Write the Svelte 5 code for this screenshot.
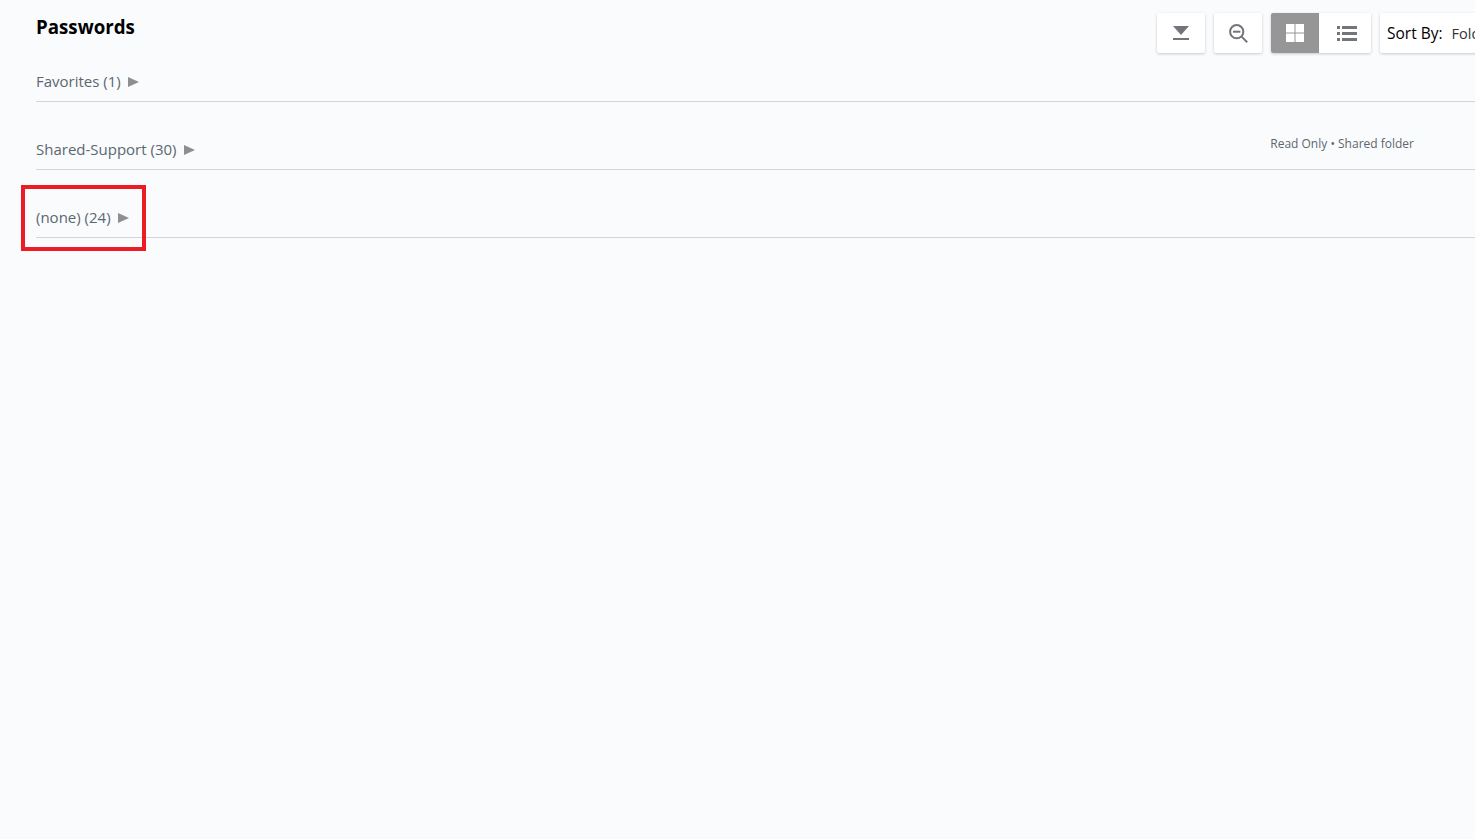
<script>
  const folders = [
    { name: 'Favorites (1)' },
    { name: 'Shared-Support (30)', note: 'Read Only • Shared folder' },
    { name: '(none) (24)', marked: true }
  ];
</script>

<div class="page">
  <header class="top">
    <h1>Passwords</h1>
    <div class="tools">
      <button class="tool" aria-label="Collapse all">
        <svg width="16" height="15" viewBox="0 0 16 15">
          <path d="M0 0h16l-8 9z" fill="#72767a" />
          <rect y="12" width="16" height="2" fill="#72767a" />
        </svg>
      </button>
      <button class="tool" aria-label="Zoom out">
        <svg width="19" height="19" viewBox="0 0 19 19" fill="none" stroke="#72767a">
          <circle cx="7.7" cy="7.7" r="6.6" stroke-width="2" />
          <path d="M4 7.7h7.4" stroke-width="2" />
          <path d="M12.6 12.6l5.6 5.6" stroke-width="2" />
        </svg>
      </button>
      <div class="toggle">
        <button class="view on" aria-label="Grid view">
          <svg width="18" height="18" viewBox="0 0 18 18" fill="#fff">
            <rect width="8.5" height="8.5" />
            <rect x="9.5" width="8.5" height="8.5" />
            <rect y="9.5" width="8.5" height="8.5" />
            <rect x="9.5" y="9.5" width="8.5" height="8.5" />
          </svg>
        </button>
        <button class="view" aria-label="List view">
          <svg width="20" height="15" viewBox="0 0 20 15" fill="#72767a">
            <rect y="0" width="3" height="3" />
            <rect x="5" y="0" width="15" height="3" />
            <rect y="6" width="3" height="3" />
            <rect x="5" y="6" width="15" height="3" />
            <rect y="12" width="3" height="3" />
            <rect x="5" y="12" width="15" height="3" />
          </svg>
        </button>
      </div>
      <div class="sort">
        <span class="sort-label">Sort By:</span>
        <span class="sort-value">Folder</span>
      </div>
    </div>
  </header>

  <section class="folders">
    {#each folders as folder}
      <div class="folder">
        <div class="title" class:marked={folder.marked}>
          <span>{folder.name}</span>
          <i class="arrow"></i>
        </div>
        {#if folder.note}
          <span class="note">{folder.note}</span>
        {/if}
      </div>
    {/each}
  </section>
</div>

<style>
  :global(body) {
    background: #fafbfd;
    font-family: "Open Sans", sans-serif;
    overflow: hidden;
  }

  .page {
    height: 839px;
    width: 1475px;
    overflow: hidden;
    padding-left: 36px;
    box-sizing: border-box;
  }

  .top {
    height: 62px;
    display: flex;
    justify-content: space-between;
    align-items: flex-start;
  }

  h1 {
    margin: 15px 0 0;
    font-size: 18.72px;
    line-height: 24px;
    font-weight: 700;
    color: #000;
  }

  .tools {
    display: flex;
    gap: 9px;
    margin-top: 13px;
    margin-right: -32px;
  }

  button {
    border: none;
    padding: 0;
    background: #fff;
    display: flex;
    align-items: center;
    justify-content: center;
  }

  .tool {
    width: 48px;
    height: 40px;
    border-radius: 2px;
    box-shadow: 0 1px 3px rgba(0, 0, 0, 0.2);
  }

  .toggle {
    display: flex;
    border-radius: 2px;
    overflow: hidden;
    box-shadow: 0 1px 3px rgba(0, 0, 0, 0.2);
  }

  .view {
    width: 52px;
    height: 40px;
    padding-left: 4px;
    box-sizing: border-box;
  }

  .view.on {
    width: 48px;
    padding-left: 0;
    background: #969696;
  }

  .sort {
    width: 127px;
    height: 40px;
    background: #fff;
    border-radius: 2px;
    box-shadow: 0 1px 3px rgba(0, 0, 0, 0.2);
    display: flex;
    align-items: center;
    gap: 9px;
    padding-left: 7px;
    box-sizing: border-box;
    font-size: 15px;
    white-space: nowrap;
  }

  .sort-label {
    color: #000;
    font-size: 15.5px;
    font-weight: 500;
  }

  .sort-value {
    color: #333;
    font-size: 14.5px;
  }

  .folder {
    height: 68px;
    box-sizing: border-box;
    border-bottom: 1px solid #d3d5d8;
    display: flex;
    justify-content: space-between;
    position: relative;
  }

  .folder:first-child {
    height: 40px;
  }

  .title {
    position: relative;
    align-self: flex-end;
    margin-bottom: 9px;
    display: flex;
    align-items: center;
    gap: 7px;
    font-size: 15px;
    line-height: 22px;
    color: #5b6770;
  }

  .arrow {
    width: 0;
    height: 0;
    border-left: 11px solid #8f8f8f;
    border-top: 5.5px solid transparent;
    border-bottom: 5.5px solid transparent;
    margin-top: 2px;
  }

  .marked::after {
    content: "";
    position: absolute;
    left: -15px;
    top: -21px;
    width: 125px;
    height: 66px;
    box-sizing: border-box;
    border: 4px solid #ed1c24;
  }

  .note {
    align-self: flex-end;
    margin: 0 61px 17px 0;
    font-size: 12px;
    line-height: 16px;
    color: #5b6770;
  }
</style>
